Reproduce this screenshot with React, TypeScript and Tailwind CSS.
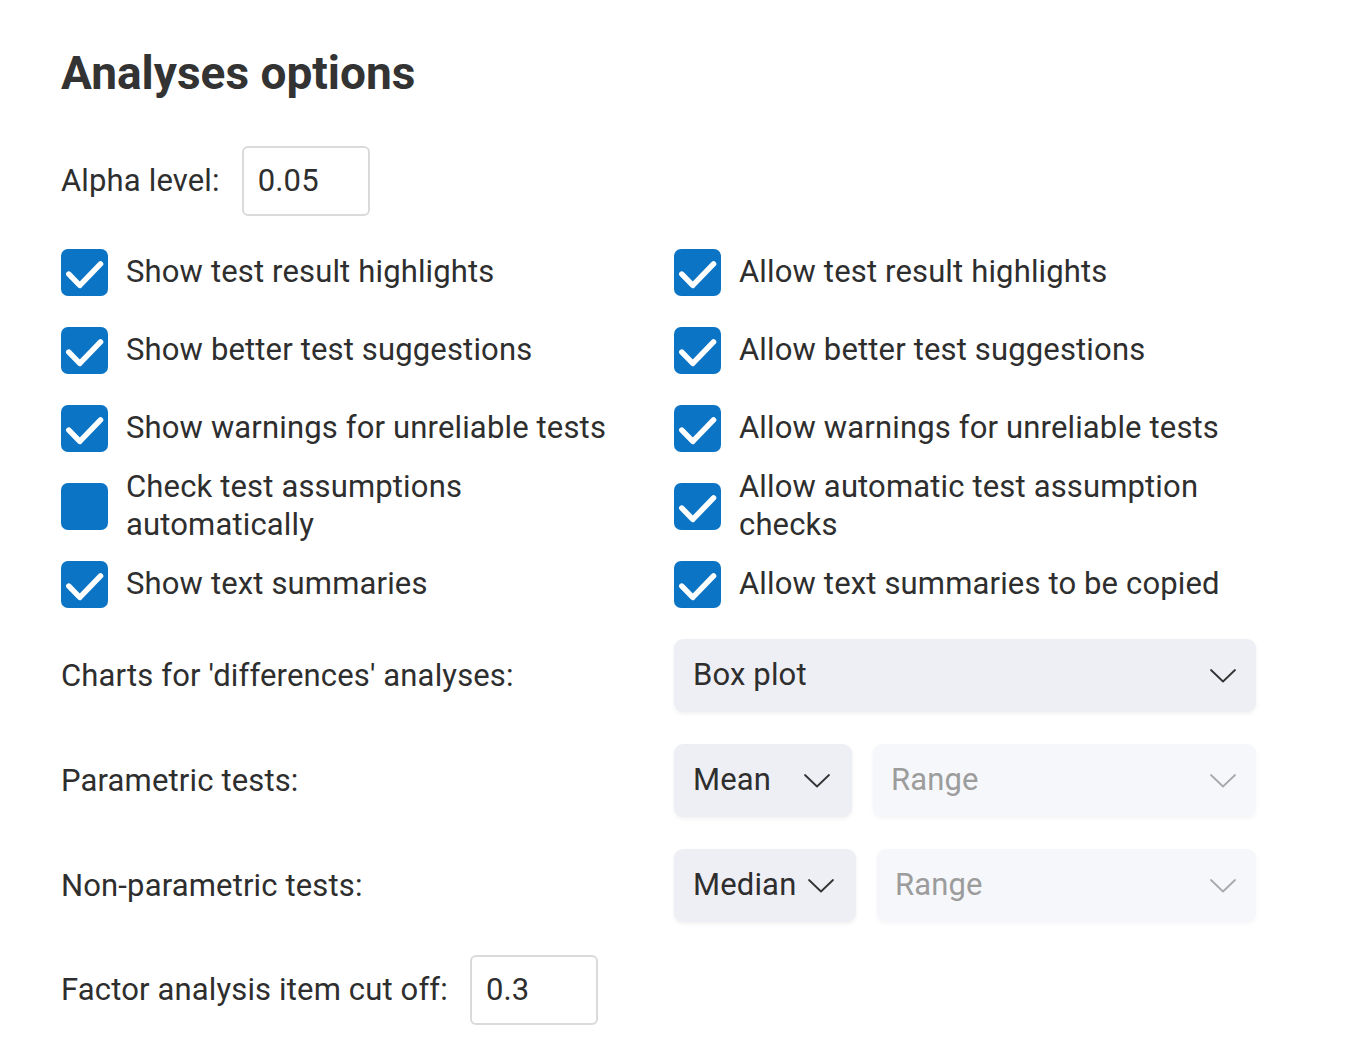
import React from "react";

const font = { fontFamily: "Roboto, 'Noto Sans', sans-serif" };

function Check({ checked }: { checked: boolean }) {
  return (
    <div className="w-[47px] h-[47px] shrink-0 rounded-[7px] bg-[#0b74c5] flex items-center justify-center">
      {checked && (
        <svg viewBox="0 0 24 24" className="w-[47px] h-[47px]" fill="none">
          <polyline points="4 12.8 9.6 18.6 20.2 7.6" stroke="#ffffff" strokeWidth="2.8" strokeLinecap="round" strokeLinejoin="round" />
        </svg>
      )}
    </div>
  );
}

function Chevron({ gray }: { gray?: boolean }) {
  return (
    <svg viewBox="0 0 26 14" className="w-[26px] h-[14px] shrink-0" fill="none">
      <polyline points="1 1 13 12.5 25 1" stroke={gray ? "#a9a9ad" : "#333333"} strokeWidth="1.8" strokeLinecap="round" strokeLinejoin="round" />
    </svg>
  );
}

function Row({ checked, children }: { checked: boolean; children: React.ReactNode }) {
  return (
    <div className="h-[78px] flex items-center gap-[18px]">
      <Check checked={checked} />
      <div className="text-[31px] tracking-[0.15px] leading-[38px] text-[#2e2e2e]">{children}</div>
    </div>
  );
}

export default function App() {
  return (
    <div className="min-h-[1056px] bg-white" style={font}>
      <div className="ml-[61px] pt-[45px] w-[1195px]">
        <h1 className="text-[46px] leading-[56px] font-bold text-[#333333]">Analyses options</h1>

        <div className="mt-[45px] flex items-center gap-[22px]">
          <span className="text-[31px] tracking-[0.15px] leading-[38px] text-[#2e2e2e]">Alpha level:</span>
          <div className="w-[128px] h-[70px] rounded-[6px] border-2 border-[#dadada] flex items-center pl-[14px] text-[31px] tracking-[0.15px] text-[#2e2e2e]">0.05</div>
        </div>

        <div className="mt-[17px] grid grid-cols-[582px_582px] gap-x-[31px]">
          <div className="flex flex-col">
            <Row checked>Show test result highlights</Row>
            <Row checked>Show better test suggestions</Row>
            <Row checked>Show warnings for unreliable tests</Row>
            <Row checked={false}>Check test assumptions automatically</Row>
            <Row checked>Show text summaries</Row>
          </div>
          <div className="flex flex-col">
            <Row checked>Allow test result highlights</Row>
            <Row checked>Allow better test suggestions</Row>
            <Row checked>Allow warnings for unreliable tests</Row>
            <Row checked>Allow automatic test assumption checks</Row>
            <Row checked>Allow text summaries to be copied</Row>
          </div>
        </div>

        <div className="mt-[16px] grid grid-cols-[582px_582px] gap-x-[31px] items-center">
          <span className="text-[31px] tracking-[0.15px] leading-[38px] text-[#2e2e2e]">Charts for 'differences' analyses:</span>
          <div className="h-[73px] rounded-[9px] bg-[#eeeff5] shadow-[0_2px_4px_rgba(0,0,0,0.06)] flex items-center justify-between pl-[19px] pr-[20px]">
            <span className="text-[31px] tracking-[0.15px] text-[#2e2e2e]">Box plot</span>
            <Chevron />
          </div>
        </div>

        <div className="mt-[32px] grid grid-cols-[582px_582px] gap-x-[31px] items-center">
          <span className="text-[31px] tracking-[0.15px] leading-[38px] text-[#2e2e2e]">Parametric tests:</span>
          <div className="flex items-center gap-[21px]">
            <div className="w-[178px] h-[73px] shrink-0 rounded-[9px] bg-[#eeeff5] shadow-[0_2px_4px_rgba(0,0,0,0.06)] flex items-center justify-between pl-[19px] pr-[22px]">
              <span className="text-[31px] tracking-[0.15px] text-[#2e2e2e]">Mean</span>
              <Chevron />
            </div>
            <div className="flex-1 h-[73px] rounded-[9px] bg-[#f6f7fa] shadow-[0_2px_4px_rgba(0,0,0,0.04)] flex items-center justify-between pl-[18px] pr-[20px]">
              <span className="text-[31px] tracking-[0.15px] text-[#9c9c9c]">Range</span>
              <Chevron gray />
            </div>
          </div>
        </div>

        <div className="mt-[32px] grid grid-cols-[582px_582px] gap-x-[31px] items-center">
          <span className="text-[31px] tracking-[0.15px] leading-[38px] text-[#2e2e2e]">Non-parametric tests:</span>
          <div className="flex items-center gap-[21px]">
            <div className="w-[182px] h-[73px] shrink-0 rounded-[9px] bg-[#eeeff5] shadow-[0_2px_4px_rgba(0,0,0,0.06)] flex items-center justify-between pl-[19px] pr-[22px]">
              <span className="text-[31px] tracking-[0.15px] text-[#2e2e2e]">Median</span>
              <Chevron />
            </div>
            <div className="flex-1 h-[73px] rounded-[9px] bg-[#f6f7fa] shadow-[0_2px_4px_rgba(0,0,0,0.04)] flex items-center justify-between pl-[18px] pr-[20px]">
              <span className="text-[31px] tracking-[0.15px] text-[#9c9c9c]">Range</span>
              <Chevron gray />
            </div>
          </div>
        </div>

        <div className="mt-[33px] flex items-center gap-[22px]">
          <span className="text-[31px] tracking-[0.15px] leading-[38px] text-[#2e2e2e]">Factor analysis item cut off:</span>
          <div className="w-[128px] h-[70px] rounded-[6px] border-2 border-[#dadada] flex items-center pl-[14px] text-[31px] tracking-[0.15px] text-[#2e2e2e]">0.3</div>
        </div>
      </div>
    </div>
  );
}
